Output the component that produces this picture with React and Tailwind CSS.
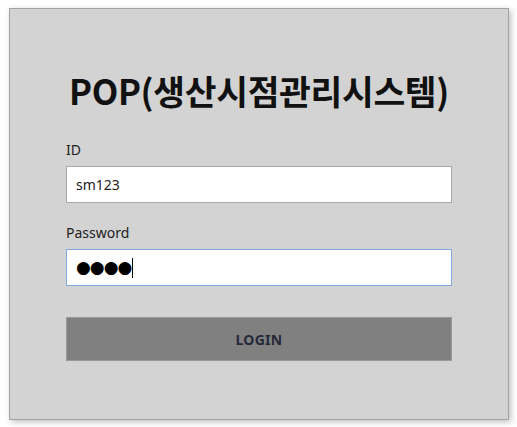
export default function App() {
  return (
    <div className="min-h-screen bg-white pl-[9px] pt-[8px]" style={{ fontFamily: '"Noto Sans", "Noto Sans CJK KR", sans-serif' }}>
      <div className="w-[500px] h-[412px] bg-[#d3d3d3] border border-[#a3a3a3] shadow-[2px_2px_6px_rgba(0,0,0,0.25)] px-[56px]">
        {/* Title */}
        <h1
          className="pt-[57px] text-center text-[34.5px] font-bold text-[#111] leading-[48px] tracking-[-0.3px] whitespace-nowrap"
          style={{ fontFamily: '"Noto Sans CJK KR", "Noto Sans", sans-serif' }}
        >
          POP(생산시점관리시스템)
        </h1>

        {/* Form */}
        <div className="mt-[26px]">
          <label className="block text-[14px] leading-[20px] text-[#222]">ID</label>
          <div className="mt-[6px] h-[37px] w-[386px] bg-white border border-[#a9a9a9] flex items-center px-[9px] text-[14px] text-[#222]">
            sm123
          </div>

          <label className="block mt-[20px] text-[14px] leading-[20px] text-[#222]">Password</label>
          <div className="mt-[6px] h-[37px] w-[386px] bg-white border border-[#7fa9e0] flex items-center px-[9px]">
            <span className="text-[17px] leading-none tracking-[-1px] text-black" style={{ fontFamily: '"DejaVu Sans", sans-serif' }}>●●●●</span>
            <span className="ml-[1px] w-px h-[20px] bg-black" />
          </div>

          <button className="mt-[31px] h-[44px] w-[386px] bg-[#808080] border border-[#999] text-[14px] font-bold text-[#25293a] tracking-[0.3px]">
            LOGIN
          </button>
        </div>
      </div>
    </div>
  );
}
